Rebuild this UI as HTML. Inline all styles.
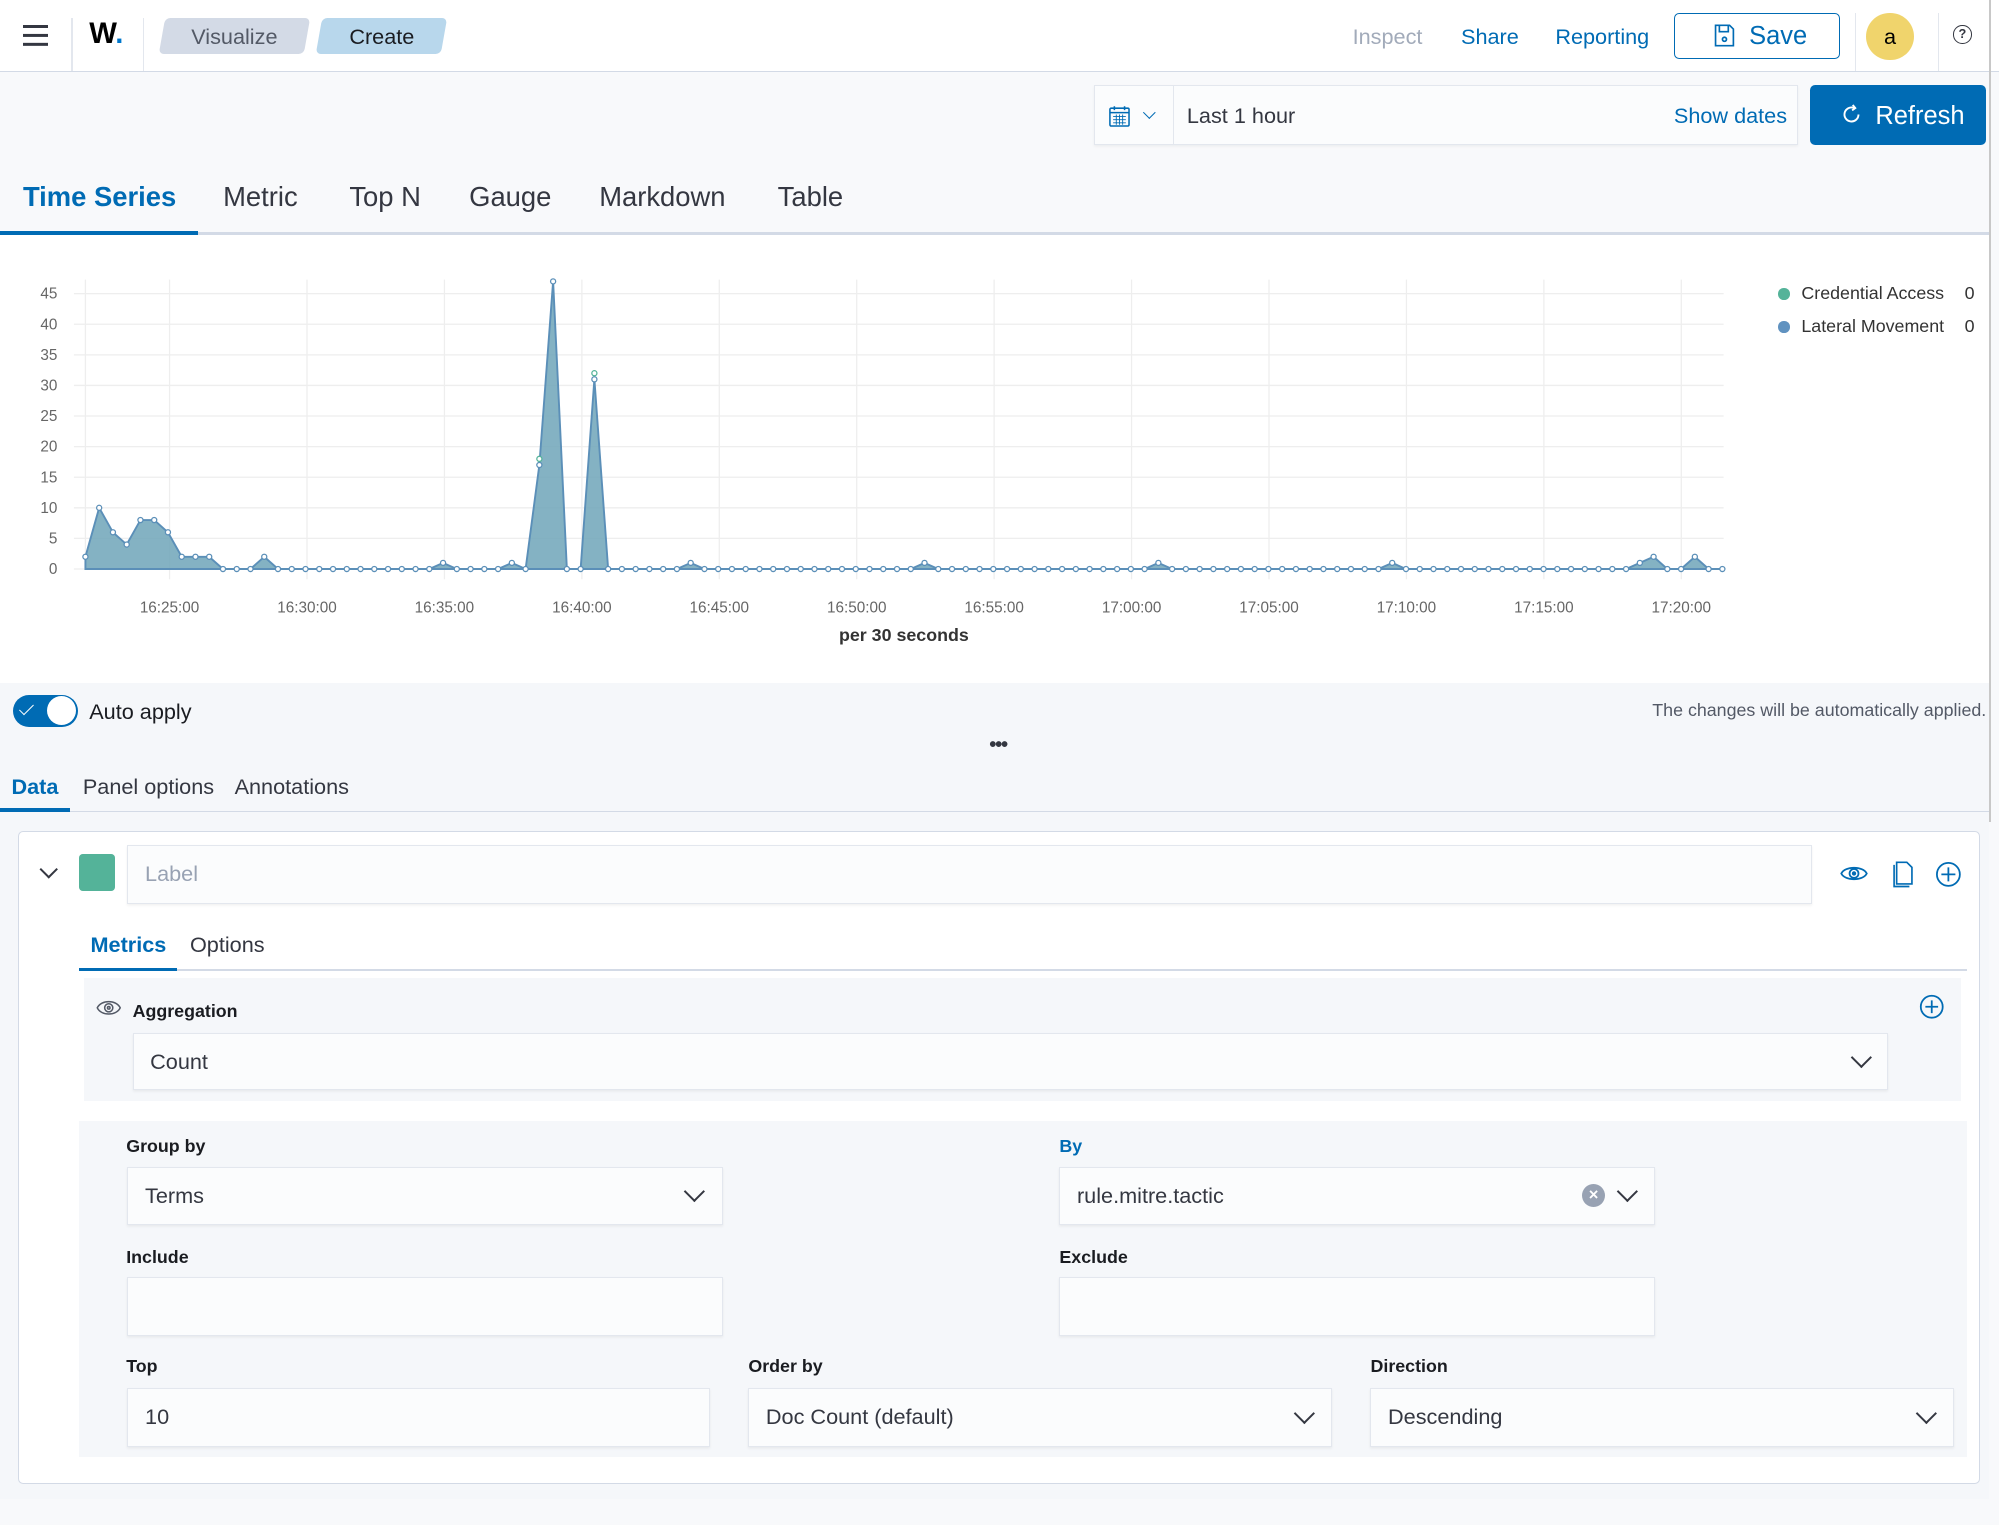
<!DOCTYPE html>
<html><head><meta charset="utf-8">
<style>
html,body{margin:0;padding:0;width:1999px;height:1525px;overflow:hidden;background:#f8f9fb}
#w{zoom:1.27487;width:1568px;height:1197px;position:relative;font-family:"Liberation Sans",sans-serif;color:#343741}
.a{position:absolute}
.inp{position:absolute;background:#fbfcfd;border:1px solid #e3e7ee;box-shadow:0 1px 2px rgba(0,0,0,.06);box-sizing:border-box;font-size:17px;line-height:44px;padding-left:13px;color:#343741}
.lbl{position:absolute;font-size:14px;font-weight:bold;color:#1a1c21}
.chev{position:absolute;width:10px;height:10px;border-right:1.6px solid #343741;border-bottom:1.6px solid #343741;transform:rotate(45deg)}
.tb{position:absolute;top:142px;font-size:21.5px}
</style></head><body><div id="w">
<div class="a" style="left:0;top:0;width:1568px;height:56px;background:#fff;border-bottom:1px solid #d3dae6"></div>
<div class="a" style="left:18px;top:20px;width:20px;height:2px;background:#343741;box-shadow:0 7px 0 #343741,0 14px 0 #343741"></div>
<div class="a" style="left:56px;top:14px;width:1px;height:42px;background:#e3e7ee"></div>
<div class="a" style="left:70px;top:13px;font-size:23px;font-weight:bold;color:#000">W<span style="color:#0077cc">.</span></div>
<div class="a" style="left:112px;top:14px;width:1px;height:42px;background:#e3e7ee"></div>
<div class="a" style="left:127px;top:14px;width:114px;height:28px;background:#d3dae6;border-radius:4px;transform:skewX(-10deg)"></div>
<div class="a" style="left:150px;top:19px;font-size:17px;color:#535966">Visualize</div>
<div class="a" style="left:250px;top:14px;width:98px;height:28px;background:#b8d7ec;border-radius:4px;transform:skewX(-10deg)"></div>
<div class="a" style="left:274px;top:19px;font-size:17px;color:#1a1c21">Create</div>
<div class="a" style="left:1061px;top:19px;font-size:17px;color:#a2abba">Inspect</div>
<div class="a" style="left:1146px;top:19px;font-size:17px;color:#006bb4">Share</div>
<div class="a" style="left:1220px;top:19px;font-size:17px;color:#006bb4">Reporting</div>
<div class="a" style="left:1313px;top:10px;width:130px;height:36px;border:1.5px solid #006bb4;border-radius:4px;box-sizing:border-box"></div>
<svg class="a" style="left:1344px;top:19px" width="18" height="18" viewBox="0 0 18 18" fill="none" stroke="#006bb4" stroke-width="1.3"><path d="M2 1h11l3 3v13H2z"/><path d="M5 1v5h7V1"/><circle cx="9" cy="12" r="1.6"/></svg>
<div class="a" style="left:1372px;top:17px;font-size:20px;color:#006bb4">Save</div>
<div class="a" style="left:1455px;top:10px;width:1px;height:46px;background:#e3e7ee"></div>
<div class="a" style="left:1464px;top:10px;width:37px;height:37px;border-radius:50%;background:#f0d46c;text-align:center;line-height:37px;font-size:17px;color:#000">a</div>
<div class="a" style="left:1520px;top:10px;width:1px;height:46px;background:#e3e7ee"></div>
<div class="a" style="left:1532px;top:20px;width:13px;height:13px;border:1.3px solid #343741;border-radius:50%;font-size:10px;text-align:center;line-height:13px;font-weight:bold">?</div>
<div class="a" style="left:1560px;top:0;width:2px;height:645px;background:#c8c8c8"></div>
<div class="a" style="left:858px;top:67px;width:552px;height:47px;border:1px solid #e3e7ee;background:#fbfcfd;box-sizing:border-box;box-shadow:0 1px 2px rgba(0,0,0,.05)"></div>
<div class="a" style="left:920px;top:67px;width:1px;height:47px;background:#e3e7ee"></div>
<svg class="a" style="left:869px;top:82px" width="18" height="18" viewBox="0 0 18 18" fill="none" stroke="#006bb4" stroke-width="1.2"><rect x="1.5" y="2.5" width="15" height="14" rx="1"/><path d="M1.5 6h15M5 1v3M13 1v3"/><path d="M4 9h10M4 11.5h10M4 14h10M6.5 7.5v8M9 7.5v8M11.5 7.5v8" stroke-width=".7"/></svg>
<div class="chev" style="left:898px;top:85px;width:6px;height:6px;border-color:#006bb4;border-width:1.2px"></div>
<div class="a" style="left:931px;top:81px;font-size:17px;color:#343741">Last 1 hour</div>
<div class="a" style="left:1313px;top:81px;font-size:17px;color:#006bb4">Show dates</div>
<div class="a" style="left:1420px;top:67px;width:138px;height:47px;background:#006bb4;border-radius:4px"></div>
<svg class="a" style="left:1443px;top:81px" width="18" height="18" viewBox="0 0 18 18" fill="none" stroke="#fff" stroke-width="1.5"><path d="M14.5 9A5.5 5.5 0 1 1 11 3.9"/><path d="M10 1.5l2 2.5-2.5 1.8"/></svg>
<div class="a" style="left:1471px;top:80px;font-size:20px;color:#fff">Refresh</div>
<div class="tb" style="left:18px;font-weight:bold;color:#006bb4">Time Series</div>
<div class="tb" style="left:175px">Metric</div>
<div class="tb" style="left:274px">Top N</div>
<div class="tb" style="left:368px">Gauge</div>
<div class="tb" style="left:470px">Markdown</div>
<div class="tb" style="left:610px">Table</div>
<div class="a" style="left:0;top:182px;width:1560px;height:2px;background:#d3dae6"></div>
<div class="a" style="left:0;top:181px;width:155px;height:3px;background:#006bb4"></div>
<div class="a" style="left:0;top:184px;width:1560px;height:352px;background:#fff"></div>
<svg class="a" id="ch" style="left:0;top:184px" width="1560" height="352"></svg>
<div class="a" style="left:709px;top:490px;transform:translateX(-50%);font-size:14px;font-weight:bold;color:#333">per 30 seconds</div>
<div class="a" style="left:1395px;top:226px;width:9px;height:9px;border-radius:50%;background:#54b399"></div>
<div class="a" style="left:1413px;top:222px;font-size:14px;color:#333">Credential Access</div>
<div class="a" style="left:1541px;top:222px;font-size:14px;color:#333">0</div>
<div class="a" style="left:1395px;top:252px;width:9px;height:9px;border-radius:50%;background:#6092c0"></div>
<div class="a" style="left:1413px;top:248px;font-size:14px;color:#333">Lateral Movement</div>
<div class="a" style="left:1541px;top:248px;font-size:14px;color:#333">0</div>
<div class="a" style="left:0;top:536px;width:1560px;height:640px;background:#f5f7fa"></div>
<div class="a" style="left:10px;top:545px;width:51px;height:25px;border-radius:13px;background:#006bb4"></div>
<div class="a" style="left:37px;top:546px;width:23px;height:23px;border-radius:50%;background:#fff"></div>
<div class="a" style="left:18px;top:550px;width:5px;height:10px;border-right:1.5px solid #fff;border-bottom:1.5px solid #fff;transform:rotate(45deg)"></div>
<div class="a" style="left:70px;top:548px;font-size:17px;color:#1a1c21">Auto apply</div>
<div class="a" style="right:10px;top:549px;font-size:14px;color:#535966">The changes will be automatically applied.</div>
<div class="a" style="left:776px;top:576px;font-size:16px;font-weight:bold;letter-spacing:-1px">•••</div>
<div class="a" style="left:9px;top:607px;font-size:17px;font-weight:bold;color:#006bb4">Data</div>
<div class="a" style="left:65px;top:607px;font-size:17px">Panel options</div>
<div class="a" style="left:184px;top:607px;font-size:17px">Annotations</div>
<div class="a" style="left:0;top:636px;width:1560px;height:1px;background:#d3dae6"></div>
<div class="a" style="left:0;top:634px;width:55px;height:3px;background:#006bb4"></div>
<div class="a" style="left:14px;top:652px;width:1539px;height:512px;background:#fff;border:1px solid #d3dae6;border-radius:4px;box-sizing:border-box"></div>
<div class="chev" style="left:33px;top:677px;width:9px;height:9px;transform:rotate(45deg)"></div>
<div class="a" style="left:62px;top:670px;width:28px;height:29px;background:#54b399;border-radius:3px"></div>
<div class="inp" style="left:100px;top:663px;width:1321px;height:46px;color:#98a2b3">Label</div>
<svg class="a" style="left:1443px;top:676px" width="22" height="18" viewBox="0 0 22 18" fill="none" stroke="#006bb4" stroke-width="1.4"><path d="M1 9C4 3 18 3 21 9C18 15 4 15 1 9z"/><circle cx="11" cy="9" r="3.5"/><circle cx="11" cy="9" r="1" fill="#006bb4"/></svg>
<svg class="a" style="left:1482px;top:675px" width="20" height="22" viewBox="0 0 20 22" fill="none" stroke="#006bb4" stroke-width="1.3"><path d="M4 3v17h12"/><path d="M6 1h8l4 4v13H6z"/></svg>
<svg class="a" style="left:1518px;top:675px" width="21" height="21" viewBox="0 0 21 21" fill="none" stroke="#006bb4" stroke-width="1.4"><circle cx="10.5" cy="10.5" r="9"/><path d="M10.5 5v11M5 10.5h11"/></svg>
<div class="a" style="left:71px;top:731px;font-size:17px;font-weight:bold;color:#006bb4">Metrics</div>
<div class="a" style="left:149px;top:731px;font-size:17px">Options</div>
<div class="a" style="left:62px;top:760px;width:1481px;height:2px;background:#d3dae6"></div>
<div class="a" style="left:62px;top:759px;width:77px;height:3px;background:#006bb4"></div>
<div class="a" style="left:66px;top:767px;width:1472px;height:97px;background:#f5f7fa"></div>
<svg class="a" style="left:75px;top:782px" width="20" height="17" viewBox="0 0 20 17" fill="none" stroke="#535966" stroke-width="1.2"><path d="M1 8.5C4 2 16 2 19 8.5C16 15 4 15 1 8.5z"/><circle cx="10" cy="8.5" r="3.2"/><circle cx="10" cy="8.5" r="1"/></svg>
<div class="lbl" style="left:104px;top:785px">Aggregation</div>
<svg class="a" style="left:1505px;top:780px" width="20" height="20" viewBox="0 0 20 20" fill="none" stroke="#006bb4" stroke-width="1.4"><circle cx="10" cy="10" r="8.6"/><path d="M10 5v10M5 10h10"/></svg>
<div class="inp" style="left:104px;top:810px;width:1377px;height:45px">Count</div>
<div class="chev" style="left:1454px;top:824px"></div>
<div class="a" style="left:62px;top:879px;width:1481px;height:264px;background:#f5f7fa"></div>
<div class="lbl" style="left:99px;top:891px">Group by</div>
<div class="lbl" style="left:831px;top:891px;color:#006bb4">By</div>
<div class="inp" style="left:100px;top:915px;width:467px;height:46px">Terms</div>
<div class="chev" style="left:539px;top:929px"></div>
<div class="inp" style="left:831px;top:915px;width:467px;height:46px">rule.mitre.tactic</div>
<div class="a" style="left:1241px;top:929px;width:18px;height:18px;border-radius:50%;background:#98a2b3;color:#fff;font-size:13px;font-weight:bold;text-align:center;line-height:18px">×</div>
<div class="chev" style="left:1271px;top:929px"></div>
<div class="lbl" style="left:99px;top:978px">Include</div>
<div class="lbl" style="left:831px;top:978px">Exclude</div>
<div class="inp" style="left:100px;top:1002px;width:467px;height:46px"></div>
<div class="inp" style="left:831px;top:1002px;width:467px;height:46px"></div>
<div class="lbl" style="left:99px;top:1064px">Top</div>
<div class="lbl" style="left:587px;top:1064px">Order by</div>
<div class="lbl" style="left:1075px;top:1064px">Direction</div>
<div class="inp" style="left:100px;top:1089px;width:457px;height:46px">10</div>
<div class="inp" style="left:587px;top:1089px;width:458px;height:46px">Doc Count (default)</div>
<div class="chev" style="left:1017px;top:1103px"></div>
<div class="inp" style="left:1075px;top:1089px;width:458px;height:46px">Descending</div>
<div class="chev" style="left:1505px;top:1103px"></div>
</div>
<script>
var s=document.getElementById('ch'),h='';var T=184;
function Y(v){return 446-T-v*4.8}
for(var i=0;i<=9;i++){var y=Y(i*5);h+='<line x1="58" x2="1352" y1="'+y+'" y2="'+y+'" stroke="#eee"/><text x="45" y="'+(y+4)+'" text-anchor="end" font-size="12" fill="#666" font-family="Liberation Sans">'+(i*5)+'</text>';}
var L=['16:25:00','16:30:00','16:35:00','16:40:00','16:45:00','16:50:00','16:55:00','17:00:00','17:05:00','17:10:00','17:15:00','17:20:00'];
for(var k=0;k<12;k++){var x=133+k*107.8;h+='<line x1="'+x+'" x2="'+x+'" y1="35" y2="270" stroke="#eee"/><text x="'+x+'" y="296" text-anchor="middle" font-size="12" fill="#666" font-family="Liberation Sans">'+L[k]+'</text>';}
h+='<line x1="67" x2="67" y1="35" y2="262" stroke="#eee"/>';
var d=[];for(i=0;i<=120;i++)d.push(0);
var set={0:2,1:10,2:6,3:4,4:8,5:8,6:6,7:2,8:2,9:2,13:2,26:1,31:1,33:17,34:47,37:31,44:1,61:1,78:1,95:1,113:1,114:2,117:2};
for(var q in set)d[q]=set[q];
var st=10.79,p='M67 '+Y(0);
var pts=[];for(i=0;i<=120;i++){var x=67+i*st;if(x>1353)break;pts.push([x,Y(d[i])]);}
pts.forEach(function(a){p+=' L'+a[0]+' '+a[1]});
p+=' L'+pts[pts.length-1][0]+' '+Y(0)+' Z';
h+='<path d="'+p+'" fill="#6fa5b9" fill-opacity=".85" stroke="#5b8fb8" stroke-width="1.5"/>';
pts.forEach(function(a){h+='<circle cx="'+a[0]+'" cy="'+a[1]+'" r="2" fill="#fff" stroke="#5b8fb8" stroke-width="1"/>'});
h+='<circle cx="'+(67+37*st)+'" cy="'+Y(32)+'" r="2" fill="#fff" stroke="#54b399"/><circle cx="'+(67+33*st)+'" cy="'+Y(18)+'" r="2" fill="#fff" stroke="#54b399"/>';
s.innerHTML=h;
</script>
</body></html>
